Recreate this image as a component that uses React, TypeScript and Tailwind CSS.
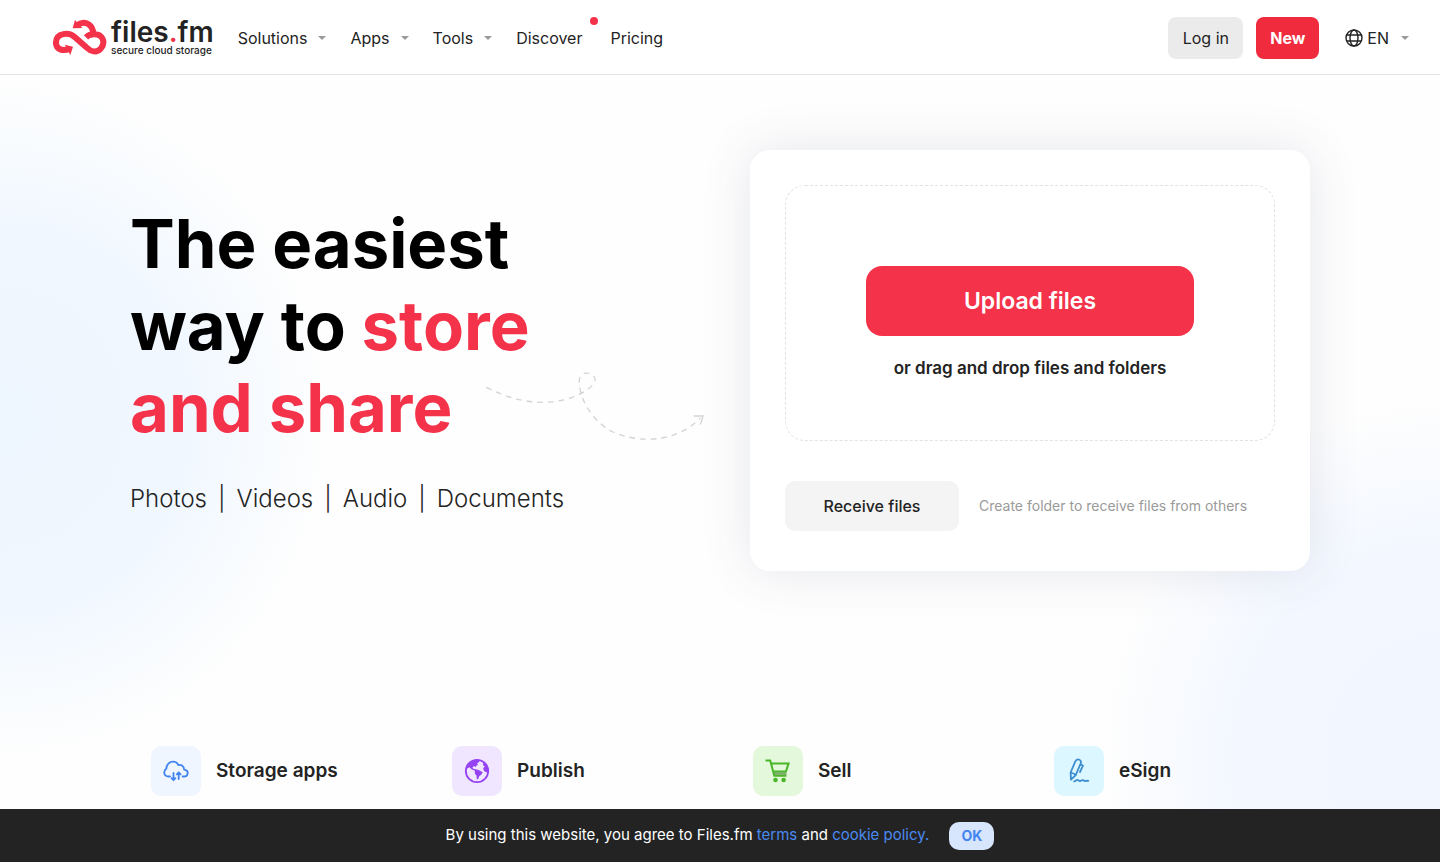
import type { ReactNode } from "react";

function Caret() {
  return (
    <svg width="8" height="4" viewBox="0 0 8 4" className="shrink-0" aria-hidden="true">
      <path d="M0 0h8L4 4z" fill="#9a9a9a" />
    </svg>
  );
}

function CloudMark() {
  return (
    <svg width="54" height="36" viewBox="38 34 162 108" fill="none" aria-hidden="true">
      <path
        d="M111 52C136 35 160 54 158 80C186 76 198 104 181 123C168 137 152 132 138 119L103 88C86 73 48 75 47 104C46 126 68 132 88 123"
        stroke="#f43249"
        strokeWidth="18"
      />
      <path d="M158 80C149 80 143 83 137 89" stroke="#f43249" strokeWidth="18" />
      <path d="M104 37L126 61L97 62zM73 111L98 117L90 142z" fill="#f43249" />
    </svg>
  );
}

function Logo() {
  return (
    <a href="#" className="flex items-center gap-1 pb-0.5 text-[#232323]">
      <CloudMark />
      <span className="flex flex-col">
        <span className="text-[28px] leading-[26px] font-semibold">
          files<span className="text-[#f43249]">.</span>fm
        </span>
        <span className="text-[10px] leading-[10px] font-medium whitespace-nowrap">secure cloud storage</span>
      </span>
    </a>
  );
}

function Globe() {
  return (
    <svg width="18" height="18" viewBox="0 0 18 18" fill="none" stroke="#232323" strokeWidth="1.4" aria-hidden="true">
      <circle cx="9" cy="9" r="8" />
      <ellipse cx="9" cy="9" rx="4" ry="8" />
      <path d="M1.8 6h14.4M1.8 12h14.4" />
    </svg>
  );
}

function Header() {
  return (
    <header className="flex h-[75px] items-center justify-between border-b border-[#e4e4e4] bg-white pt-0.5 pr-[31px] pl-[53px]">
      <div className="flex items-center gap-6">
        <Logo />
        <nav className="flex items-center gap-6">
          {["Solutions", "Apps", "Tools"].map((item) => (
            <button key={item} type="button" className="flex items-center gap-[11px]">
              {item}
              <Caret />
            </button>
          ))}
          <a href="#" className="relative mr-1">
            Discover
            <span className="absolute -top-[9px] -right-4 size-2 rounded-full bg-[#f43249]" />
          </a>
          <a href="#">Pricing</a>
        </nav>
      </div>
      <div className="flex items-center">
        <button type="button" className="h-[42px] w-[75px] rounded-lg bg-[#ebebeb]">
          Log in
        </button>
        <button type="button" className="ml-[13px] h-[42px] w-[63px] rounded-lg bg-[#f02b3d] font-bold text-white">
          New
        </button>
        <button type="button" className="ml-[26px] flex items-center gap-1">
          <Globe />
          <span className="mr-2">EN</span>
          <Caret />
        </button>
      </div>
    </header>
  );
}

function DashedArrow() {
  return (
    <svg
      className="absolute top-[167px] left-[353px]"
      width="227"
      height="73"
      viewBox="40 30 681 219"
      fill="none"
      stroke="#d4d4d4"
      strokeWidth="4"
      aria-hidden="true"
    >
      <path
        d="M50 82C108 112 165 127 220 127C292 127 360 96 375 65C384 38 333 26 329 60C326 115 370 187 430 216C512 252 622 246 692 174"
        strokeDasharray="17 15"
      />
      <path d="M672 168H700L692 194" />
    </svg>
  );
}

function Intro() {
  const kinds = ["Photos", "Videos", "Audio", "Documents"];
  return (
    <div className="relative pb-0.5">
      <h1 className="text-[67px] leading-[82px] font-bold text-black">
        The easiest
        <br />
        way to <span className="text-[#f43249]">store</span>
        <br />
        <span className="text-[#f43249]">and share</span>
      </h1>
      <DashedArrow />
      <p className="mt-8 flex gap-[11px] text-2xl leading-9 font-light text-[#232323]">
        {kinds.map((kind, i) => (
          <span key={kind} className="flex gap-[11px]">
            {i > 0 && <span>|</span>}
            {kind}
          </span>
        ))}
      </p>
    </div>
  );
}

function UploadCard() {
  return (
    <section className="w-[560px] shrink-0 rounded-[20px] bg-white px-[35px] pt-[35px] pb-10 shadow-[0_0_50px_rgba(60,70,110,0.13)]">
      <div className="flex flex-col items-center rounded-[20px] border border-dashed border-[#e2e2e2] px-20 pt-20 pb-[60px]">
        <button type="button" className="h-[70px] w-full rounded-2xl bg-[#f43249] text-[23px] font-semibold text-white">
          Upload files
        </button>
        <p className="mt-5 text-[17px] leading-6 font-semibold">or drag and drop files and folders</p>
      </div>
      <div className="mt-10 flex items-center gap-5">
        <button type="button" className="h-[50px] w-[174px] rounded-[10px] bg-[#f4f4f4] font-medium text-[#232323]">
          Receive files
        </button>
        <p className="text-sm text-[#9a9a9a]">Create folder to receive files from others</p>
      </div>
    </section>
  );
}

function Feature({ label, tile, children }: { label: string; tile: string; children: ReactNode }) {
  return (
    <a href="#" className="flex items-center gap-[15px]">
      <span className={`flex size-[50px] items-center justify-center rounded-[10px] ${tile}`}>{children}</span>
      <span className="text-[19px] font-semibold">{label}</span>
    </a>
  );
}

function Features() {
  return (
    <section className="mt-[175px] grid grid-cols-[repeat(3,301px)_1fr] pl-[21px]">
      <Feature label="Storage apps" tile="bg-[#eff6ff]">
        <svg width="26" height="26" viewBox="0 0 26 26" fill="none" stroke="#4284f0" strokeWidth="1.8" strokeLinecap="round" strokeLinejoin="round">
          <path d="M7 18.5H5.8C2.9 18.5 1 16.7 1.3 14.2C1.5 12.3 2.2 11.2 3.4 10.6C3.4 6.4 6.4 3.7 10 3.7C12.5 3.7 14.4 5 15.4 7.2C18.1 6.2 21.1 8.2 21.2 11.7C23.4 12 24.8 13.3 24.7 15.1C24.6 17.2 22.8 18.5 20.8 18.5H19.6" />
          <path d="M10.5 15V21.5M8.6 20.2L10.5 22.2L12.4 20.2M15.7 21V15M13.8 16.4L15.7 14.4L17.6 16.4" />
        </svg>
      </Feature>
      <Feature label="Publish" tile="bg-[#f0e6ff]">
        <svg width="26" height="26" viewBox="0 0 26 26">
          <circle cx="13" cy="13" r="11.2" fill="none" stroke="#9542f2" strokeWidth="1.8" />
          <path d="M2 11C3 5.5 8 1.8 15.2 2L15.2 4L13 5.4L14 6.8L12 8L11.7 9.2L10 8L8.4 9.6L9.7 11L12 11.3L15 12.2L18.8 14.2L17 17L15.3 18L14.2 21L12.8 21.5L12.5 17.5L10.8 15.7L10.9 12.8L7.5 11.2L5.5 9.2z" fill="#9542f2" />
          <path d="M19.5 4.5L18.8 7.2L20.8 8L19.2 10.4L20 13L22.2 14.2L24.5 14V10L22 6z" fill="#9542f2" />
        </svg>
      </Feature>
      <Feature label="Sell" tile="bg-[#e4f8dc]">
        <svg width="26" height="26" viewBox="0 0 26 26" fill="none" strokeWidth="2">
          <path d="M8.6 15.6H21.5" stroke="#83a575" strokeWidth="2.4" />
          <path d="M.5 2.4H5.2L9.3 17.8H21.5M5.8 5.4H23.6L20.9 13.6H8.3" stroke="#49b627" />
          <circle cx="10.5" cy="22" r="2.3" fill="#49b627" />
          <circle cx="18.6" cy="22" r="2.3" fill="#49b627" />
        </svg>
      </Feature>
      <Feature label="eSign" tile="bg-[#dcf7ff]">
        <svg width="26" height="26" viewBox="0 0 26 26" fill="none" stroke="#3c8dd0" strokeWidth="1.8" strokeLinecap="round" strokeLinejoin="round">
          <path d="M4.6 14.5L9.2 3.6C10.2 1.4 11.8 1 13.4 1.7C15 2.4 15.3 3.8 14.6 5.6L9.8 17L5 21.7zM4.6 14.5C6.2 15 8.5 15.9 9.8 17M14.8 6.3L17 7.7L14 14" />
          <path d="M8.2 23.4C9.6 23.4 10.4 21.6 11.6 21.8C12.8 22 12.6 23.4 14 23.2C15.2 23 15.8 21.8 17 22.1C18.2 22.4 18 23.4 19.3 23.2C20.4 23 21 22.6 22.3 22.8" />
        </svg>
      </Feature>
    </section>
  );
}

function CookieBar() {
  return (
    <aside className="fixed inset-x-0 bottom-0 flex h-[53px] items-center justify-center gap-5 bg-[#232323] text-[15px] text-white">
      <p>
        By using this website, you agree to Files.fm{" "}
        <a href="#" className="text-[#4a8af0]">
          terms
        </a>{" "}
        and{" "}
        <a href="#" className="text-[#4a8af0]">
          cookie policy.
        </a>
      </p>
      <button type="button" className="h-7 w-[45px] rounded-[10px] bg-[#d7e5fd] text-sm font-bold text-[#4284f0]">
        OK
      </button>
    </aside>
  );
}

export default function App() {
  return (
    <div className="min-h-screen bg-[#fefefe] bg-[radial-gradient(ellipse_330px_340px_at_0px_420px,#eef6ff_0%,#f0f7ff_55%,#fefefe00_100%),radial-gradient(ellipse_340px_360px_at_100%_760px,#f2f6ff_0%,#f3f7ff_60%,#fefefe00_100%)] font-['Inter',sans-serif] text-base text-[#232323]">
      <Header />
      <main className="mx-auto max-w-[1180px] pt-[75px] pb-[66px]">
        <div className="flex items-center justify-between">
          <Intro />
          <UploadCard />
        </div>
        <Features />
      </main>
      <CookieBar />
    </div>
  );
}
